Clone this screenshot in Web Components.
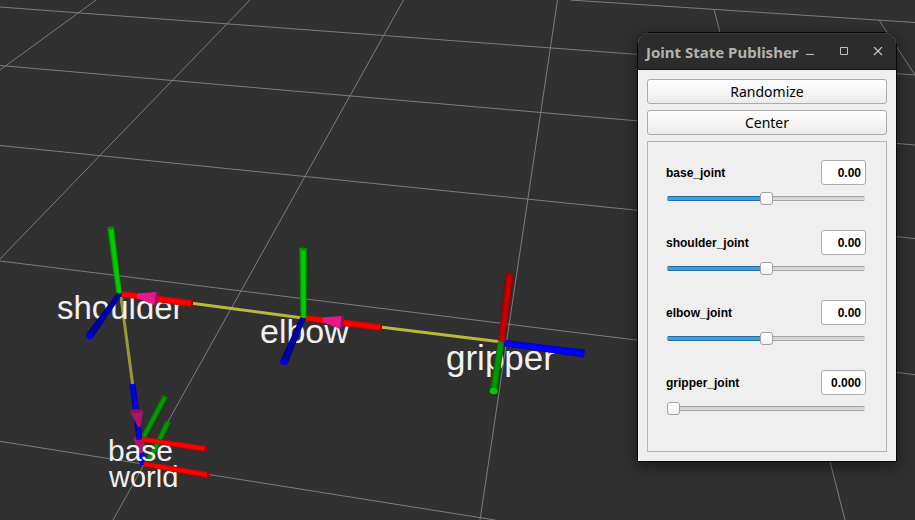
<!DOCTYPE html>
<html lang="en">
<head>
<meta charset="utf-8">
<title>Joint State Publisher</title>
<style>
  html, body { margin: 0; height: 100%; background: #303030; overflow: hidden; }
  body { font-family: "Noto Sans", "Open Sans", sans-serif; }
</style>
</head>
<body>
<rviz-desktop>
  <tf-scene></tf-scene>
  <app-window slot="window" heading="Joint State Publisher">
    <push-button>Randomize</push-button>
    <push-button>Center</push-button>
    <joint-panel>
      <joint-control name="base_joint" value="0.00" position="50"></joint-control>
      <joint-control name="shoulder_joint" value="0.00" position="50"></joint-control>
      <joint-control name="elbow_joint" value="0.00" position="50"></joint-control>
      <joint-control name="gripper_joint" value="0.000" position="0"></joint-control>
    </joint-panel>
  </app-window>
</rviz-desktop>
<script>
class Base extends HTMLElement {
  connectedCallback() {
    if (!this.shadowRoot) this.attachShadow({ mode: "open" }).innerHTML = this.render();
  }
}

customElements.define("rviz-desktop", class extends Base {
  render() {
    return `<style>
      :host { display: block; position: relative; height: 100vh; overflow: hidden; background: #303030; }
      ::slotted(app-window) { position: absolute; top: 32px; right: 18px; }
    </style><slot></slot><slot name="window"></slot>`;
  }
});

/* Ground grid and coordinate frames */
customElements.define("tf-scene", class extends Base {
  render() {
    let n = 0;
    const defs = [];
    const bar = (x1, y1, w1, x2, y2, w2, mid, edge, tip) => {
      const len = Math.hypot(x2 - x1, y2 - y1);
      const nx = -(y2 - y1) / len, ny = (x2 - x1) / len;
      const h = w2 / 2, id = "g" + n++;
      defs.push(`<linearGradient id="${id}" gradientUnits="userSpaceOnUse" x1="${x2 - nx * h}" y1="${y2 - ny * h}" x2="${x2 + nx * h}" y2="${y2 + ny * h}"><stop offset="0" stop-color="${edge}"/><stop offset=".35" stop-color="${mid}"/><stop offset=".7" stop-color="${mid}"/><stop offset="1" stop-color="${edge}"/></linearGradient>`);
      const p = (x, y, w, s) => `${x + s * nx * w / 2},${y + s * ny * w / 2}`;
      const deg = Math.atan2(y2 - y1, x2 - x1) * 180 / Math.PI;
      return `<polygon points="${p(x1, y1, w1, 1)} ${p(x2, y2, w2, 1)} ${p(x2, y2, w2, -1)} ${p(x1, y1, w1, -1)}" fill="url(#${id})"/>` +
        (tip ? `<ellipse cx="${x2}" cy="${y2}" rx="${tip[1]}" ry="${h}" transform="rotate(${deg} ${x2} ${y2})" fill="${tip[0]}"/>` : "");
    };
    const line = (a, b, c, d) => `<line x1="${a}" y1="${b}" x2="${c}" y2="${d}"/>`;
    const grid = [
      [570, 0, 915, 22.5], [0, 7, 915, 75], [0, 65.5, 915, 145], [0, 145.5, 915, 238.5],
      [0, 261, 915, 374.7], [0, 441.3, 495, 520],
      [96, 0, 0, 70], [250, 0, 0, 259], [403.5, 0, 113, 520], [557.5, 0, 480, 520],
      [714, 9, 845, 520], [879, 20, 915, 75]
    ].map(l => line(...l)).join("");
    const label = (x, y, s, t) => `<text x="${x}" y="${y}" font-size="${s}">${t}</text>`;
    const R = ["#ff0000", "#c00000"], G = ["#00cc00", "#006c00"], B = ["#0000a8", "#000068"];
    const body =
      `<g stroke="#b9b93c" stroke-width="3">${line(190, 303, 303, 318)}${line(380, 327, 502, 342)}</g>
       <line x1="121" y1="297" x2="133" y2="387" stroke="#98983a" stroke-width="3"/>` +
      /* world and base, behind their labels */
      bar(149, 461, 5, 168, 422, 6, "#009c00", "#006800", ["#008400", 1]) +
      bar(143, 438, 5, 165, 397, 6, "#009c00", "#006800", ["#008400", 1]) +
      bar(141, 450, 6, 143, 465, 6, "#0000f0", "#000090") +
      `<polygon points="133,438 145,437 143,453 139,453" fill="#a8146c"/>` +
      bar(132.5, 384, 6, 139.5, 439, 6, "#0000ee", "#000090", ["#0000cc", 1]) +
      `<polygon points="130,411 143,411 140.5,427 138,427" fill="#b01468"/><ellipse cx="136.5" cy="411" rx="6.5" ry="2" fill="#8c1054"/>` +
      label(108, 461, 30, "base") + label(109, 487, 29, "world") +
      label(57, 319, 33, "shoulder") + label(260, 343, 34, "elbow") + label(446, 370, 35, "gripper") +
      bar(142, 439, 5, 206, 449, 6, ...R, ["#9c0000", 1.5]) +
      bar(144, 464, 5, 208, 475, 6, ...R, ["#9c0000", 1.5]) +
      /* shoulder */
      bar(122, 294, 6, 192, 303.5, 7, ...R, ["#a80000", 1]) +
      bar(119, 293, 5.5, 110.7, 228, 7.5, ...G, ["#009000", 1.5]) +
      bar(119.5, 294, 5, 89.5, 336, 7.5, ...B, ["#0000dc", 3]) +
      `<ellipse cx="156.5" cy="298.5" rx="1.8" ry="7" transform="rotate(8 156.5 298.5)" fill="#94105c"/><polygon points="137,293.5 156,292 154.5,305 137,298" fill="#e81888"/>` +
      /* elbow */
      bar(306, 318, 6, 381, 327.5, 7, ...R, ["#a80000", 1]) +
      bar(303.5, 318, 6, 303, 249, 8, ...G, ["#009000", 1.5]) +
      bar(303, 318, 5.5, 284, 362, 8, ...B, ["#0000dc", 3]) +
      `<ellipse cx="342" cy="322.5" rx="1.8" ry="7" transform="rotate(8 342 322.5)" fill="#94105c"/><polygon points="322.5,317.5 341.5,316 340,329 322.5,322" fill="#e81888"/>` +
      /* gripper */
      bar(504, 343, 6.5, 584, 353.5, 8, "#0000ff", "#0000b4", ["#0000b8", 0.5]) +
      bar(501.5, 342, 6.5, 509.7, 274, 8.5, "#c40000", "#7c0000", ["#a00000", 1.5]) +
      bar(501, 342, 6.5, 493.7, 391, 8, "#009800", "#006000", ["#00cc00", 3.2]);
    return `<style>
      :host { display: block; height: 100%; }
      svg { display: block; width: 100%; height: 100%; }
      text { font-family: "Liberation Sans", Arial, sans-serif; fill: #f0f0f0; }
    </style>
    <svg viewBox="0 0 915 520" preserveAspectRatio="xMinYMin slice" role="img" aria-label="Robot frames">
      <defs>${defs.join("")}</defs>
      <g stroke="#7c7c7c" stroke-width="1">${grid}</g>${body}
    </svg>`;
  }
});

customElements.define("app-window", class extends Base {
  render() {
    return `<style>
      :host { display: block; box-sizing: border-box; width: 260px; border: 1px solid #080808; border-radius: 12px 12px 0 0; background: #efefef; overflow: hidden; box-shadow: 0 4px 16px rgba(0,0,0,.5); }
      header { box-sizing: border-box; display: flex; align-items: center; justify-content: space-between; height: 37px; padding: 0 6px 0 8px; background: #2c2c2c; border-top: 1px solid #383838; border-bottom: 1px solid #161616; }
      h1 { margin: 0; font-size: 15px; line-height: 20px; font-weight: 700; color: #b4b2af; white-space: nowrap; min-width: 0; }
      nav { display: flex; gap: 14px; }
      button { width: 20px; height: 24px; padding: 0; border: 0; background: none; display: grid; place-items: center; }
      header { padding-right: 8px; }
      svg { width: 10px; height: 10px; fill: none; stroke: #c4c2c0; }
      main { display: flex; flex-direction: column; gap: 6px; padding: 9px; }
    </style>
    <header><h1>${this.getAttribute("heading")}</h1>
      <nav>
        <button aria-label="Minimize"><svg viewBox="0 0 10 10"><path d="M1 7.5h8"/></svg></button>
        <button aria-label="Maximize"><svg viewBox="0 0 10 10"><path d="M1.5 .5h7v7h-7z"/></svg></button>
        <button aria-label="Close"><svg viewBox="0 0 10 10"><path d="M1 0l8 8M9 0l-8 8" stroke-width="1.2"/></svg></button>
      </nav>
    </header>
    <main><slot></slot></main>`;
  }
});

customElements.define("push-button", class extends Base {
  render() {
    return `<style>
      :host { display: block; }
      button { display: block; box-sizing: border-box; width: 100%; height: 25px; padding: 0; border: 1px solid #ababab; border-radius: 3px; background: linear-gradient(#fff, #ebebeb); font: 14px/23px "Noto Sans", sans-serif; color: #000; }
    </style><button type="button"><slot></slot></button>`;
  }
});

customElements.define("joint-panel", class extends Base {
  render() {
    return `<style>
      :host { display: flex; flex-direction: column; gap: 24px; border: 1px solid #b5b5b5; padding: 18px 20px 35px 18px; }
    </style><slot></slot>`;
  }
});

customElements.define("joint-control", class extends Base {
  render() {
    const name = this.getAttribute("name"), pos = this.getAttribute("position");
    return `<style>
      :host { display: grid; gap: 6px; font: bold 12px/15px "Liberation Sans", Arial, sans-serif; color: #000; }
      div { display: flex; justify-content: space-between; align-items: center; }
      label { padding-top: 2px; }
      input { box-sizing: border-box; font: inherit; color: inherit; }
      .value { width: 45px; height: 25px; padding: 0 4px; border: 1px solid #ababab; border-radius: 3px; background: #fff; text-align: right; }
      .slider { appearance: none; display: block; width: auto; height: 15px; margin: 0 1px; background: none; }
      .slider::-webkit-slider-runnable-track { box-sizing: border-box; height: 5px; border-radius: 2px;
        background: linear-gradient(#256c9e, #256c9e) 0 0 / ${pos}% 1px no-repeat, linear-gradient(#256c9e, #256c9e) 0 100% / ${pos}% 1px no-repeat, linear-gradient(#3f9fe0, #3f9fe0) 0 0 / ${pos}% 100% no-repeat, linear-gradient(#a6a6a6 1px, #cfcfcf 1px, #dcdcdc 4px, #a6a6a6 4px); }
      .slider::-webkit-slider-thumb { appearance: none; box-sizing: border-box; width: 13px; height: 13px; margin-top: -4px; border: 1px solid #a3a3a3; border-radius: 3px; background: linear-gradient(#fff, #f2f2f2); }
    </style>
    <div><label for="v">${name}</label><input class="value" id="v" type="text" value="${this.getAttribute("value")}"></div>
    <input class="slider" type="range" min="0" max="100" value="${pos}" aria-label="${name}">`;
  }
});
</script>
</body>
</html>
